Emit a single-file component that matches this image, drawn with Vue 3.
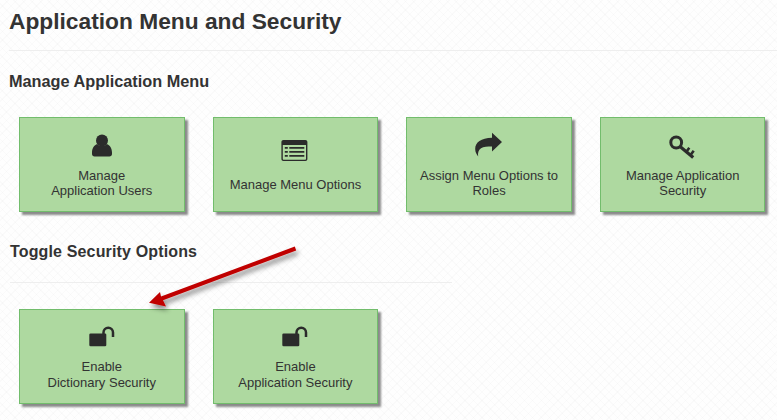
<script setup>
const menuCards = [
  { id: 'user', lines: ['Manage', 'Application Users'] },
  { id: 'list', lines: ['Manage Menu Options'] },
  { id: 'share', lines: ['Assign Menu Options to', 'Roles'] },
  { id: 'key', lines: ['Manage Application', 'Security'] },
]
const toggleCards = [
  { lines: ['Enable', 'Dictionary Security'] },
  { lines: ['Enable', 'Application Security'] },
]
</script>

<template>
  <div class="page">
    <h1 class="title">Application Menu and Security</h1>

    <h3 class="section">Manage Application Menu</h3>
    <div class="cards">
      <a v-for="c in menuCards" :key="c.id" class="card" :class="{ single: c.lines.length === 1 }">
        <svg class="icon" viewBox="0 0 40 28" width="40" height="28">
          <g v-if="c.id === 'user'" fill="#2b2b2b">
            <circle cx="20" cy="8.5" r="6" />
            <path d="M10 20.500c0-4.500 2.200-7.600 5.200-8.600 1.300 1.400 3 2.100 4.800 2.100s3.500-.7 4.800-2.100c3 1 5.200 4.100 5.200 8.600v1.600c0 1.300-1.100 2.400-2.500 2.400h-15c-1.400 0-2.500-1.100-2.500-2.400z" />
          </g>
          <g v-else-if="c.id === 'list'" fill="#2b2b2b" transform="translate(.8 0)">
            <path fill-rule="evenodd" d="M7.600 3h22c1.100 0 2 .9 2 2v17c0 1.100-.9 2-2 2h-22c-1.100 0-2-.9-2-2V5c0-1.100.9-2 2-2zM7 8v14c0 .4.300.7.700.7h21.800c.4 0 .7-.3.700-.7V8z" />
            <path d="M9 10h3v1.700H9zM13.500 10h15v1.700h-15zM9 14h3v1.700H9zM13.500 14h15v1.700h-15zM9 18h3v1.700H9zM13.500 18h15v1.700h-15z" />
          </g>
          <path v-else-if="c.id === 'share'" fill="#2b2b2b" d="M33 10 23 .8v5C12 6 6.200 10.500 6.200 17c0 3 1.300 5.500 3 7.400-.7-3.400.3-6.400 2.800-8.100 2.500-1.600 6.500-1.700 11-1.700v5z" />
          <g v-else fill="none" stroke="#2b2b2b">
            <circle cx="13.200" cy="10.500" r="5.400" stroke-width="3" />
            <path d="M17 14.500 30.200 25.500" stroke-width="3.200" />
            <path d="M27.200 23.500 30.700 18.800M23.200 20 26.300 15.800" stroke-width="2.600" />
          </g>
        </svg>
        <span class="label"><span v-for="l in c.lines" :key="l" class="line">{{ l }}</span></span>
      </a>
    </div>

    <h3 class="section toggle">Toggle Security Options</h3>
    <div class="cards">
      <a v-for="c in toggleCards" :key="c.lines[1]" class="card tall">
        <svg class="icon" viewBox="0 0 40 28" width="40" height="28">
          <rect x="7.300" y="10.500" width="17" height="12.700" rx="1.300" fill="#2b2b2b" />
          <path d="M21.500 11V9.500a4.750 4.750 0 0 1 9.500 0V14" fill="none" stroke="#2b2b2b" stroke-width="2.500" />
        </svg>
        <span class="label"><span v-for="l in c.lines" :key="l" class="line">{{ l }}</span></span>
      </a>
    </div>

    <svg class="arrow" viewBox="0 0 777 420" width="777" height="420">
      <defs>
        <filter id="arrow-shadow" x="-20%" y="-20%" width="140%" height="140%">
          <feDropShadow dx="2" dy="4" stdDeviation="2.500" flood-color="#000" flood-opacity="0.45" />
        </filter>
      </defs>
      <path fill="#c00000" filter="url(#arrow-shadow)" d="M294.800 246.600 296.200 250.400 163 300.200 166 306.500 149 302.800 160 292 161 296.600z" />
    </svg>
  </div>
</template>

<style>
html, body { margin: 0; background: #fff; }
</style>

<style scoped>
.page {
  position: relative;
  width: 777px;
  height: 420px;
  overflow: hidden;
  box-sizing: border-box;
  padding: 0 0 0 9px;
  font-family: "Liberation Sans", Arial, sans-serif;
  color: #333;
  background-color: #fefefe;
  background-image:
    repeating-linear-gradient(45deg, rgba(0, 0, 0, 0.016) 0 1px, transparent 1px 6px),
    repeating-linear-gradient(-45deg, rgba(0, 0, 0, 0.016) 0 1px, transparent 1px 6px);
}
.title {
  margin: 0;
  height: 50px;
  font-size: 22.75px;
  line-height: 42px;
  font-weight: 700;
  border-bottom: 1px solid #eee;
}
.section {
  margin: 20px 0 0;
  font-size: 16.3px;
  line-height: 20px;
  font-weight: 700;
}
.toggle {
  margin: 30px 0 0 1px;
  width: 442px;
  padding-bottom: 20px;
  font-size: 16px;
  letter-spacing: 0.15px;
  border-bottom: 1px solid #eee;
}
.cards {
  display: flex;
  gap: 28.17px;
  margin: 26px 0 0 10px;
}
.card {
  box-sizing: border-box;
  width: 165.5px;
  height: 95px;
  display: flex;
  flex-direction: column;
  align-items: center;
  justify-content: center;
  background: #aed9a0;
  border: 1px solid #72bd6c;
  box-shadow: 3px 3px 2px #8a8a8a;
  color: #333;
}
.icon { display: block; margin-bottom: 8px; }
.single .icon { margin-bottom: 12px; }
.label {
  display: block;
  font-size: 13px;
  line-height: 15px;
  text-align: center;
}
.tall .label { line-height: 16px; }
.line { display: block; }
.arrow {
  position: absolute;
  left: 0;
  top: 0;
  pointer-events: none;
}
</style>
